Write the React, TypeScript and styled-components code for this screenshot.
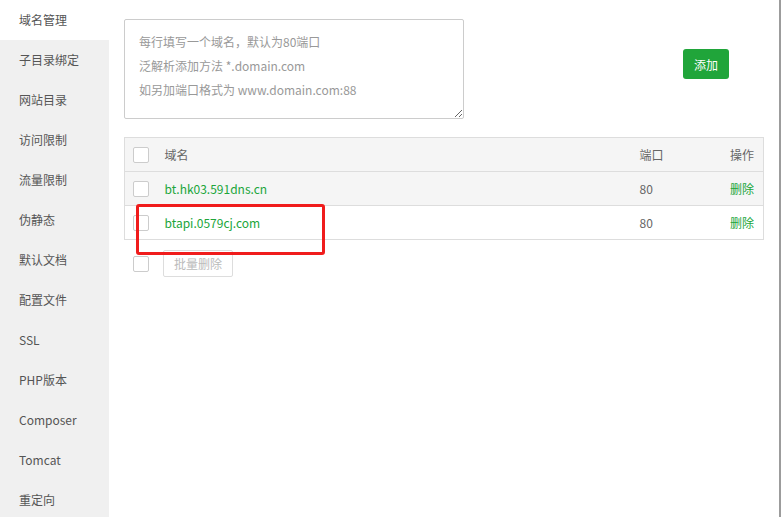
import React from "react";
import styled, { createGlobalStyle } from "styled-components";

const GlobalStyle = createGlobalStyle`
  html, body { margin: 0; padding: 0; background: #fff; }
  body {
    font-family: "Noto Sans CJK SC", "Noto Sans", sans-serif;
    font-size: 12px;
    color: #555;
  }
  * { box-sizing: border-box; }
`;

const Page = styled.div`
  display: flex;
  width: 781px;
  height: 517px;
  overflow: hidden;
`;

const Sidebar = styled.nav`
  width: 109px;
  flex-shrink: 0;
  background: #f0f0f0;
  display: flex;
  flex-direction: column;
`;

const NavItem = styled.div<{ $active?: boolean }>`
  flex-shrink: 0;
  height: 40px;
  line-height: 40px;
  padding-left: 19px;
  font-size: 12px;
  color: #555;
  background: ${(p) => (p.$active ? "#fff" : "transparent")};
  white-space: nowrap;
`;

const Main = styled.main`
  position: relative;
  flex: 1;
  background: #fff;
  padding: 19px 15px 0 15px;
`;

const EdgeStrip = styled.div`
  width: 2px;
  flex-shrink: 0;
  background: #9c9c9c;
`;

const TopRow = styled.div`
  display: flex;
  align-items: flex-start;
`;

const DomainInput = styled.textarea`
  display: block;
  width: 340px;
  height: 100px;
  border: 1px solid #ccc;
  border-radius: 2px;
  padding: 10px 14px;
  font-family: "Noto Sans CJK SC", "Noto Sans", sans-serif;
  font-size: 12px;
  line-height: 24px;
  color: #555;
  outline: none;
  &::placeholder {
    color: #999;
  }
`;

const AddButton = styled.button`
  margin: 30px 35px 0 auto;
  width: 46px;
  height: 30px;
  border: none;
  border-radius: 3px;
  background: #20a53a;
  color: #fff;
  font-family: "Noto Sans CJK SC", sans-serif;
  font-size: 12px;
  padding: 0;
`;

const Table = styled.table`
  width: 100%;
  margin-top: 18px;
  border-collapse: collapse;
  border: 1px solid #ddd;
  table-layout: fixed;
`;

const Row = styled.tr<{ $shaded?: boolean }>`
  height: 34px;
  background: ${(p) => (p.$shaded ? "#f5f5f5" : "#fff")};
  border-bottom: 1px solid #ddd;
`;

const Cell = styled.td<{ $align?: string }>`
  padding: 0 9px;
  height: 33px;
  font-size: 12px;
  color: #666;
  text-align: ${(p) => p.$align || "left"};
  vertical-align: middle;
  white-space: nowrap;
`;

const CheckCell = styled(Cell)`
  padding: 0 0 0 8px;
`;

const Check = styled.span`
  display: block;
  width: 16px;
  height: 16px;
  border: 1px solid #ccc;
  border-radius: 2px;
  background: #fff;
`;

const DomainLink = styled.span`
  color: #20a53a;
`;

const DeleteLink = styled.span`
  color: #20a53a;
`;

const BottomRow = styled.div`
  display: flex;
  align-items: center;
  gap: 14px;
  margin-top: 10px;
  padding-left: 9px;
`;

const BatchButton = styled.button`
  width: 70px;
  height: 27px;
  border: 1px solid #ddd;
  border-radius: 2px;
  background: #fff;
  color: #bbb;
  font-family: "Noto Sans CJK SC", sans-serif;
  font-size: 12px;
  padding: 0;
`;

const Highlight = styled.div`
  position: absolute;
  left: 27px;
  top: 204px;
  width: 189px;
  height: 51px;
  border: 3px solid #f01c1c;
  border-radius: 3px;
  pointer-events: none;
`;

const navItems = [
  "域名管理",
  "子目录绑定",
  "网站目录",
  "访问限制",
  "流量限制",
  "伪静态",
  "默认文档",
  "配置文件",
  "SSL",
  "PHP版本",
  "Composer",
  "Tomcat",
  "重定向",
];

const domains = [
  { name: "bt.hk03.591dns.cn", port: 80 },
  { name: "btapi.0579cj.com", port: 80 },
];

export default function App() {
  return (
    <>
      <GlobalStyle />
      <Page>
        <Sidebar>
          {navItems.map((n, i) => (
            <NavItem key={n} $active={i === 0}>
              {n}
            </NavItem>
          ))}
        </Sidebar>
        <Main>
          <TopRow>
            <DomainInput
              placeholder={
                "每行填写一个域名，默认为80端口\n泛解析添加方法 *.domain.com\n如另加端口格式为 www.domain.com:88"
              }
            />
            <AddButton>添加</AddButton>
          </TopRow>
          <Table>
            <colgroup>
              <col style={{ width: 31 }} />
              <col />
              <col style={{ width: 73 }} />
              <col style={{ width: 60 }} />
            </colgroup>
            <tbody>
              <Row $shaded>
                <CheckCell>
                  <Check />
                </CheckCell>
                <Cell>域名</Cell>
                <Cell>端口</Cell>
                <Cell $align="right">操作</Cell>
              </Row>
              {domains.map((d, i) => (
                <Row key={d.name} $shaded={i === 0}>
                  <CheckCell>
                    <Check />
                  </CheckCell>
                  <Cell>
                    <DomainLink>{d.name}</DomainLink>
                  </Cell>
                  <Cell>{d.port}</Cell>
                  <Cell $align="right">
                    <DeleteLink>删除</DeleteLink>
                  </Cell>
                </Row>
              ))}
            </tbody>
          </Table>
          <BottomRow>
            <Check />
            <BatchButton>批量删除</BatchButton>
          </BottomRow>
          <Highlight />
        </Main>
        <EdgeStrip />
      </Page>
    </>
  );
}
